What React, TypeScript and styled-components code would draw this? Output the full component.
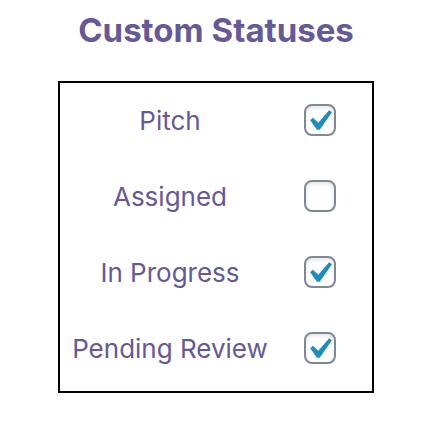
import React from "react";
import styled, { createGlobalStyle } from "styled-components";

const GlobalStyle = createGlobalStyle`
  body {
    margin: 0;
    background: #ffffff;
    color: #655997;
    font-family: Inter, "Liberation Sans", sans-serif;
  }
`;

const Panel = styled.main`
  display: flex;
  flex-direction: column;
  align-items: center;
  gap: 28px;
  padding: 8px 10px 32px 0;
`;

const Title = styled.h1`
  margin: 0;
  font-size: 33px;
  line-height: 45px;
  font-weight: 700;
`;

const StatusTable = styled.table`
  padding-bottom: 4px;
  border: 2px solid #000000;
  border-collapse: separate;
  border-spacing: 0;
`;

const LabelCell = styled.th`
  box-sizing: border-box;
  height: 76px;
  padding: 0 12px 2px;
  font-size: 26px;
  font-weight: 400;
  text-align: center;
`;

const CheckCell = styled.td`
  padding: 0 36px 2px 24px;
`;

const CheckFrame = styled.span`
  display: grid;
  width: 32px;
  height: 32px;

  & > * {
    grid-area: 1 / 1;
  }
`;

const Checkbox = styled.input`
  appearance: none;
  box-sizing: border-box;
  width: 32px;
  height: 32px;
  margin: 0;
  border: 2px solid #7e8993;
  border-radius: 8px;
  background: #ffffff;
  box-shadow: inset 0 2px 4px rgba(0, 0, 0, 0.1);

  &:checked + svg {
    visibility: visible;
  }
`;

const CheckMark = styled.svg`
  width: 32px;
  height: 32px;
  fill: #1e8cbe;
  pointer-events: none;
  visibility: hidden;
`;

const statuses = [
  { id: "pitch", name: "Pitch", enabled: true },
  { id: "assigned", name: "Assigned", enabled: false },
  { id: "in-progress", name: "In Progress", enabled: true },
  { id: "pending-review", name: "Pending Review", enabled: true },
];

export default function App() {
  return (
    <>
      <GlobalStyle />
      <Panel>
        <Title>Custom Statuses</Title>
        <StatusTable>
          <tbody>
            {statuses.map(({ id, name, enabled }) => (
              <tr key={id}>
                <LabelCell scope="row">
                  <label htmlFor={id}>{name}</label>
                </LabelCell>
                <CheckCell>
                  <CheckFrame>
                    <Checkbox id={id} type="checkbox" defaultChecked={enabled} />
                    <CheckMark viewBox="2.86 1.9 15.24 15.24" aria-hidden="true">
                      <path d="M14.83 4.89l1.34.94-5.81 8.38H9.02L5.78 9.67l1.34-1.25 2.57 2.4z" />
                    </CheckMark>
                  </CheckFrame>
                </CheckCell>
              </tr>
            ))}
          </tbody>
        </StatusTable>
      </Panel>
    </>
  );
}
